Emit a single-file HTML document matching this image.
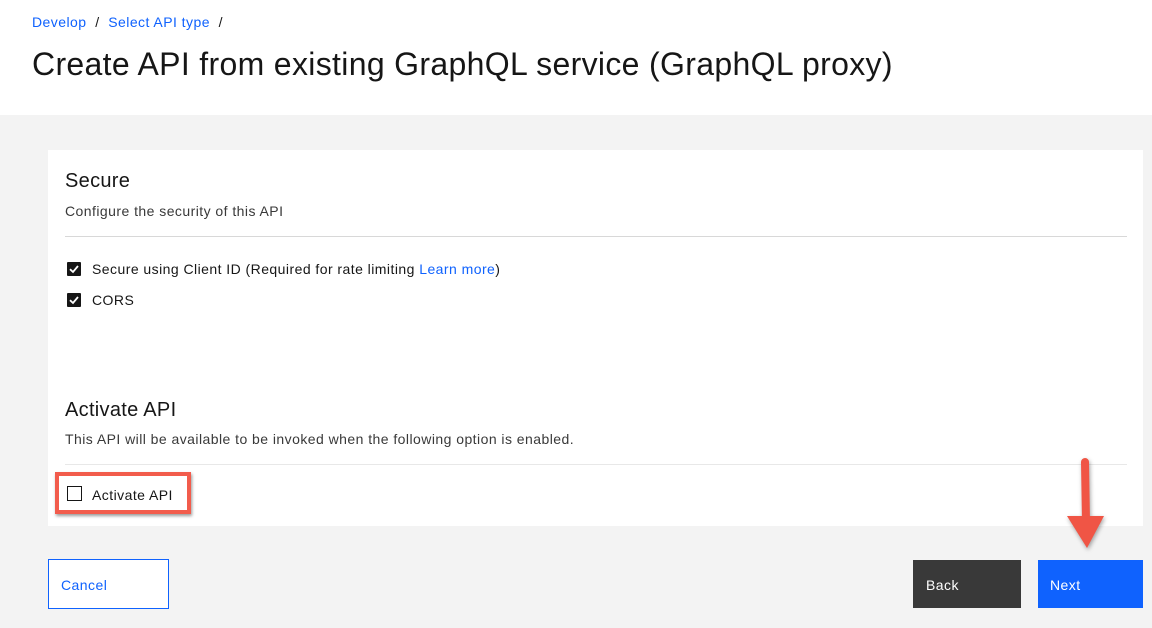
<!DOCTYPE html>
<html><head><style>
body{margin:0;width:1152px;height:628px;background:#f3f3f3;font-family:"Liberation Sans",sans-serif;position:relative;overflow:hidden;color:#161616}
.hdr{position:absolute;left:0;top:0;width:1152px;height:115px;background:#fff}
.a{position:absolute;white-space:nowrap;letter-spacing:0.45px}
.card{position:absolute;left:48px;top:150px;width:1095px;height:376px;background:#fff}
.cb{position:absolute;width:14px;height:14px;background:#161616;border-radius:1px}
.cb svg{position:absolute;left:0;top:0}
.line{position:absolute;height:1px;background:#d8d8d8}
</style></head><body>
<div class="hdr"></div>
<div class="a" style="left:32px;top:14px;font-size:14px;color:#0f62fe">Develop <span style="color:#161616">&nbsp;/&nbsp;</span> Select API type <span style="color:#161616">&nbsp;/</span></div>
<div class="a" style="left:32px;top:46px;font-size:32px;color:#161616;letter-spacing:0.33px">Create API from existing GraphQL service (GraphQL proxy)</div>
<div class="card"></div>
<div class="a" style="left:65px;top:170px;font-size:20px;letter-spacing:0.3px">Secure</div>
<div class="a" style="left:65px;top:203px;font-size:14px;color:#393939">Configure the security of this API</div>
<div class="line" style="left:65px;top:236px;width:1062px"></div>
<div class="cb" style="left:67px;top:262px"><svg width="14" height="14"><path d="M3 7.2 L6 10 L11 4" stroke="#fff" stroke-width="1.8" fill="none"/></svg></div>
<div class="a" style="left:92px;top:261px;font-size:14px">Secure using Client ID (Required for rate limiting <span style="color:#0f62fe">Learn more</span>)</div>
<div class="cb" style="left:67px;top:293px"><svg width="14" height="14"><path d="M3 7.2 L6 10 L11 4" stroke="#fff" stroke-width="1.8" fill="none"/></svg></div>
<div class="a" style="left:92px;top:292px;font-size:14px">CORS</div>
<div class="a" style="left:65px;top:399px;font-size:20px;letter-spacing:0.3px">Activate API</div>
<div class="a" style="left:65px;top:431px;font-size:14px;color:#393939">This API will be available to be invoked when the following option is enabled.</div>
<div class="line" style="left:65px;top:464px;width:1062px;background:#e8e8e8"></div>
<div style="position:absolute;left:55px;top:472px;width:128px;height:34px;border:4px solid #f25c4c;box-shadow:1px 2px 3px rgba(0,0,0,.4)"></div>
<div style="position:absolute;left:67px;top:486px;width:15px;height:15px;border:1px solid #161616;box-sizing:border-box"></div>
<div class="a" style="left:92px;top:487px;font-size:14px">Activate API</div>
<div style="position:absolute;left:48px;top:559px;width:119px;height:48px;border:1px solid #0f62fe;background:#fff"></div>
<div class="a" style="left:61px;top:577px;font-size:14px;color:#0f62fe">Cancel</div>
<div style="position:absolute;left:913px;top:560px;width:108px;height:48px;background:#393939"></div>
<div class="a" style="left:926px;top:577px;font-size:14px;color:#fff">Back</div>
<div style="position:absolute;left:1038px;top:560px;width:105px;height:48px;background:#0f62fe"></div>
<div class="a" style="left:1050px;top:577px;font-size:14px;color:#fff">Next</div>
<svg style="position:absolute;left:1060px;top:450px" width="50" height="105"><g style="filter:drop-shadow(1px 2px 2px rgba(0,0,0,.35))"><line x1="25" y1="12" x2="26" y2="72" stroke="#f05545" stroke-width="8" stroke-linecap="round"/><path d="M7 66 L44 66 L27 98 Z" fill="#f05545"/></g></svg>
</body></html>
